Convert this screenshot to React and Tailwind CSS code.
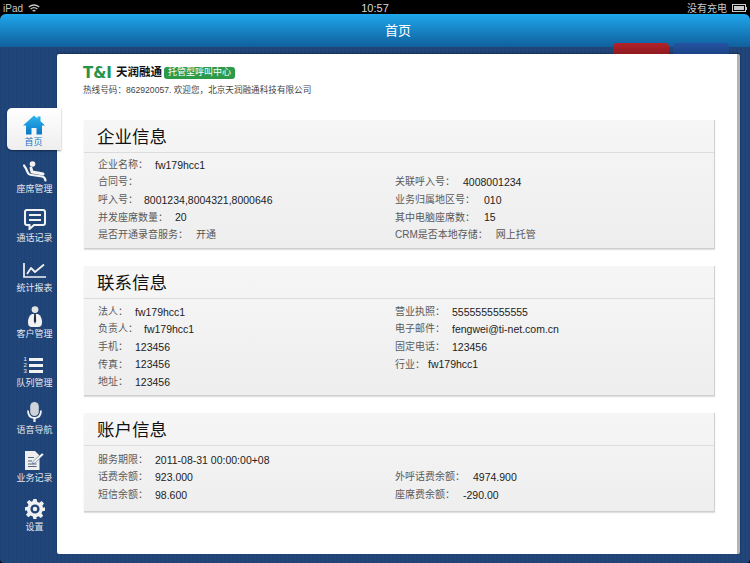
import React from 'react';

const fontStack = "font-['Liberation_Sans','Noto_Sans_CJK_SC',sans-serif]";

const HomeIcon = () => (
  <svg width="22" height="20" viewBox="0 0 22 20" className="mb-[1px]">
    <defs>
      <linearGradient id="homeFill" x1="0" y1="0" x2="0" y2="1">
        <stop offset="0" stopColor="#2db4ee" />
        <stop offset="1" stopColor="#0a78c8" />
      </linearGradient>
    </defs>
    <path d="M11 0.5 L14.5 3.6 V1.5 H17.5 V6.2 L22 10.5 H19 V19.5 H13.5 V13 H8.5 V19.5 H3 V10.5 H0 Z" fill="url(#homeFill)" />
  </svg>
);

const SeatIcon = () => (
  <svg width="24" height="21" viewBox="0 0 24 21" fill="none" stroke="#f2f2f2" strokeLinecap="round" strokeLinejoin="round">
    <circle cx="9.5" cy="3" r="2.8" fill="#f2f2f2" stroke="none" />
    <path d="M8 7 L9 11 L15 12 L20 13" strokeWidth="3" />
    <path d="M1 4.5 Q3 7 4.5 11 Q5.5 14 9 14 L19 15.5 Q22 16 22.5 19.5" strokeWidth="2.2" />
  </svg>
);

const ChatIcon = () => (
  <svg width="22" height="21" viewBox="0 0 22 21" fill="none" stroke="#f2f2f2" className="-mt-[1px]">
    <path d="M3 1 H19 Q21 1 21 3 V14 Q21 16 19 16 H10 L5.5 20 V16 H3 Q1 16 1 14 V3 Q1 1 3 1 Z" strokeWidth="2" />
    <path d="M5 6 H17 M5 11 H17" strokeWidth="2" />
  </svg>
);

const ChartIcon = () => (
  <svg width="23" height="15" viewBox="0 0 23 15" fill="none" stroke="#f2f2f2" className="mt-[1px]">
    <path d="M1 0 V14 H23" strokeWidth="1.7" />
    <path d="M4 11 L8 5 L12 9 L21 1.5" strokeWidth="1.8" strokeLinejoin="round" />
  </svg>
);

const PersonIcon = () => (
  <svg width="14" height="21" viewBox="0 0 14 21">
    <circle cx="7" cy="3.6" r="3.4" fill="#e4e4e4" />
    <path d="M4 8 H10 Q14 10 14 16.5 Q14 21 10 21 H4 Q0 21 0 16.5 Q0 10 4 8 Z" fill="#f2f2f2" />
    <path d="M6.2 8 H7.8 L8.2 15 L7 18 L5.8 15 Z" fill="#1d2c45" />
  </svg>
);

const ListIcon = () => (
  <div className="flex h-[18px] w-[21px] items-center gap-[2px] -ml-[1px]">
    <div className="flex flex-col text-[6px] leading-[6px] text-[#f2f2f2] font-['Liberation_Sans',sans-serif]">
      <span>1</span>
      <span>2</span>
      <span>3</span>
    </div>
    <div className="flex flex-col gap-[3px]">
      <div className="h-[3px] w-[14px] bg-[#f2f2f2]" />
      <div className="h-[3px] w-[14px] bg-[#f2f2f2]" />
      <div className="h-[3px] w-[14px] bg-[#f2f2f2]" />
    </div>
  </div>
);

const MicIcon = () => (
  <svg width="15" height="20" viewBox="0 0 15 20" fill="none">
    <rect x="3.2" y="0" width="8.6" height="14" rx="4.3" fill="#cfd4da" />
    <path d="M1 8.5 Q1 16 7.5 16 Q14 16 14 8.5" stroke="#f2f2f2" strokeWidth="1.8" />
    <path d="M7.5 16 V20" stroke="#f2f2f2" strokeWidth="2.2" />
  </svg>
);

const DocIcon = () => (
  <svg width="19" height="19" viewBox="0 0 19 19">
    <path d="M0 0 H10 L14.5 4.5 V19 H0 Z" fill="#eeeeee" />
    <path d="M3 6.5 H9 M3 10 H7 M3 13 H11.5 M3 15.5 H11.5" stroke="#55657c" strokeWidth="1.1" />
    <path d="M8 10.5 L17 2 L19 3.5 L10 12 L7.5 12.8 Z" fill="#f7f7f7" stroke="#1f4477" strokeWidth="0.5" />
  </svg>
);

const GearIcon = () => (
  <svg width="20" height="20" viewBox="0 0 24 24" className="-mt-[1px]">
    <path
      fill="#f0f0f0"
      fillRule="evenodd"
      d="M10 0 H14 L14.6 3.4 L17.2 4.5 L20 2.5 L22.8 5.3 L20.8 8.1 L21.9 10.4 L24 10 V14 L20.9 14.6 L19.8 17.2 L21.8 20 L19 22.8 L16.2 20.8 L13.6 21.9 L14 24 H10 L9.4 20.9 L6.8 19.8 L4 21.8 L1.2 19 L3.2 16.2 L2.1 13.6 L0 14 V10 L3.1 9.4 L4.2 6.8 L2.2 4 L5 1.2 L7.8 3.2 L9.4 2.1 Z M12 6.5 A5.5 5.5 0 1 0 12 17.5 A5.5 5.5 0 1 0 12 6.5 Z M12 9.3 A2.7 2.7 0 1 1 12 14.7 A2.7 2.7 0 1 1 12 9.3 Z"
    />
  </svg>
);

const navItems = [
  { label: '座席管理', icon: SeatIcon, height: 'h-[45px]' },
  { label: '通话记录', icon: ChatIcon, height: 'h-[49px]' },
  { label: '统计报表', icon: ChartIcon, height: 'h-[50px]' },
  { label: '客户管理', icon: PersonIcon, height: 'h-[46px]' },
  { label: '队列管理', icon: ListIcon, height: 'h-[49px]' },
  { label: '语音导航', icon: MicIcon, height: 'h-[47px]' },
  { label: '业务记录', icon: DocIcon, height: 'h-[48px]' },
  { label: '设置', icon: GearIcon, height: 'h-[49px]' },
];

// \uFF1A is the full-width colon, the reference lays its values out after it
const sections = [
  {
    title: '企业信息',
    height: 'h-[129px]',
    bodyPad: 'pt-[3px]',
    left: [
      ['企业名称\uFF1A', 'fw179hcc1'],
      ['合同号\uFF1A', ''],
      ['呼入号\uFF1A', '8001234,8004321,8000646', 'ml-[6px]'],
      ['并发座席数量\uFF1A', '20'],
      ['是否开通录音服务\uFF1A', '开通', 'ml-[8px] !text-[10px] !text-[#555]'],
    ],
    right: [
      ['', ''],
      ['关联呼入号\uFF1A', '4008001234', 'ml-[8px]'],
      ['业务归属地区号\uFF1A', '010', 'ml-[9px]'],
      ['其中电脑座席数\uFF1A', '15', 'ml-[9px]'],
      ['CRM是否本地存储\uFF1A', '网上托管', 'ml-[8px] !text-[10px] !text-[#555]'],
    ],
  },
  {
    title: '联系信息',
    height: 'h-[130px]',
    bodyPad: 'pt-[4px]',
    left: [
      ['法人\uFF1A', 'fw179hcc1'],
      ['负责人\uFF1A', 'fw179hcc1', 'ml-[6px]'],
      ['手机\uFF1A', '123456'],
      ['传真\uFF1A', '123456'],
      ['地址\uFF1A', '123456'],
    ],
    right: [
      ['营业执照\uFF1A', '5555555555555'],
      ['电子邮件\uFF1A', 'fengwei@ti-net.com.cn'],
      ['固定电话\uFF1A', '123456'],
      ['行业\uFF1A', 'fw179hcc1', 'ml-[3px]'],
    ],
  },
  {
    title: '账户信息',
    height: 'h-[99px]',
    bodyPad: 'pt-[5px]',
    left: [
      ['服务期限\uFF1A', '2011-08-31 00:00:00+08'],
      ['话费余额\uFF1A', '923.000'],
      ['短信余额\uFF1A', '98.600'],
    ],
    right: [
      ['', ''],
      ['外呼话费余额\uFF1A', '4974.900', 'ml-[8px]'],
      ['座席费余额\uFF1A', '-290.00', 'ml-[8px]'],
    ],
  },
];

const InfoColumn = ({ rows }) => (
  <div className="flex flex-col">
    {rows.map(([label, value, gap], i) => (
      <div key={i} className="flex h-[17.6px] items-center text-[10px] leading-none">
        <span className="text-[#5a5a5a]">{label}</span>
        <span className={`${gap || 'ml-[7px]'} text-[10.5px] text-[#222]`}>{value}</span>
      </div>
    ))}
  </div>
);

const Section = ({ section }) => (
  <div className={`${section.height} flex flex-col border-b border-r border-[#d0d0d0] bg-gradient-to-b from-[#f6f6f6] to-[#eeeeee] shadow-[0_1px_1px_rgba(0,0,0,0.12)]`}>
    <div className="flex h-[33px] shrink-0 items-center border-b border-[#dcdcdc] pl-[13px] pt-[2px] text-[17.5px] text-[#111]">
      {section.title}
    </div>
    <div className={`grid grid-cols-[297px_1fr] pl-[14px] ${section.bodyPad}`}>
      <InfoColumn rows={section.left} />
      <InfoColumn rows={section.right} />
    </div>
  </div>
);

const App = () => {
  return (
    <div className={`flex h-[563px] w-[750px] flex-col overflow-hidden bg-black ${fontStack}`}>
      {/* status bar */}
      <div className="grid h-[14px] shrink-0 grid-cols-3 items-center px-[3px] text-[10px] text-[#c8c8c8]">
        <div className="flex items-center gap-[5px]">
          <span>iPad</span>
          <svg width="12" height="9" viewBox="0 0 12 9" fill="none" stroke="#c8c8c8" strokeWidth="1.3">
            <path d="M0.7 3 Q6 -1 11.3 3" />
            <path d="M2.6 5 Q6 2.2 9.4 5" />
            <path d="M4.6 7 Q6 6 7.4 7" />
          </svg>
        </div>
        <span className="text-center text-[11px] text-[#d8d8d8]">10:57</span>
        <div className="flex items-center justify-end gap-[5px]">
          <span>没有充电</span>
          <div className="flex items-center">
            <div className="h-[8px] w-[14px] border border-[#c8c8c8] p-[1px]">
              <div className="h-full w-[10px] bg-[#c8c8c8]" />
            </div>
            <div className="h-[3px] w-[1px] bg-[#c8c8c8]" />
          </div>
        </div>
      </div>

      <div className="flex flex-1 flex-col overflow-hidden rounded-t-[6px] rounded-b-[4px] bg-[repeating-linear-gradient(90deg,#1f4376_0,#1f4376_2px,#21467a_2px,#21467a_4px)]">
        {/* title bar */}
        <div className="flex h-[33px] shrink-0 items-center justify-center bg-gradient-to-b from-[#1fa7ec] to-[#10609d] pl-[46px] text-[13px] text-white">
          首页
        </div>

        <div className="flex flex-1">
          {/* side nav */}
          <div className="relative z-10 flex w-[57px] shrink-0 flex-col pt-[61px]">
            <div className="ml-[7px] flex h-[42px] w-[54px] flex-col items-center justify-end rounded-l-[5px] bg-gradient-to-b from-white to-[#eeeeee] pb-[2px] pr-[1px] shadow-[0_1px_2px_rgba(0,0,0,0.4)]">
              <HomeIcon />
              <span className="text-[9px] leading-[12px] text-[#1577c4]">首页</span>
            </div>
            {navItems.map(({ label, icon: Icon, height }) => (
              <div key={label} className={`${height} flex flex-col items-center justify-end pl-[12px]`}>
                <div className="flex h-[24px] items-center justify-center">
                  <Icon />
                </div>
                <span className="text-[9px] leading-[12px] text-[#e4e8ee]">{label}</span>
              </div>
            ))}
          </div>

          {/* content */}
          <div className="relative mb-[9px] mr-[10px] mt-[7px] flex-1 rounded-[2px] border-r-[3px] border-[#b4b4b4] bg-white shadow-[0_-1px_2px_rgba(0,0,0,0.3)]">
            <div className="absolute -top-[11px] left-[556px] h-[11px] w-[56px] rounded-t-[4px] bg-gradient-to-b from-[#b5222a] to-[#8e1a1f]" />
            <div className="absolute -top-[11px] left-[616px] h-[11px] w-[56px] rounded-t-[4px] bg-gradient-to-b from-[#2553a3] to-[#1c4486]" />

            <div className="pl-[26px] pt-[12px]">
              <div className="flex h-[14px] items-center">
                <span className="font-['DejaVu_Sans',sans-serif] text-[15px] font-bold leading-none text-[#25944a]">T&amp;I</span>
                <span className="ml-[4px] text-[11.5px] font-bold text-[#111]">天润融通</span>
                <span className="ml-[2px] flex h-[12px] w-[71px] items-center justify-center rounded-[3px] bg-[#2c9a49] text-[9px] text-white">
                  托管型呼叫中心
                </span>
              </div>
              <div className="mt-[4px] text-[8.6px] leading-[12px] text-[#444]">
                {'热线号码\uFF1A862920057. 欢迎您\uFF0C北京天润融通科技有限公司'}
              </div>
            </div>

            <div className="ml-[27px] mt-[24px] flex w-[631px] flex-col gap-[17px]">
              {sections.map((section) => (
                <Section key={section.title} section={section} />
              ))}
            </div>
          </div>
        </div>
      </div>
    </div>
  );
};

export default App;
